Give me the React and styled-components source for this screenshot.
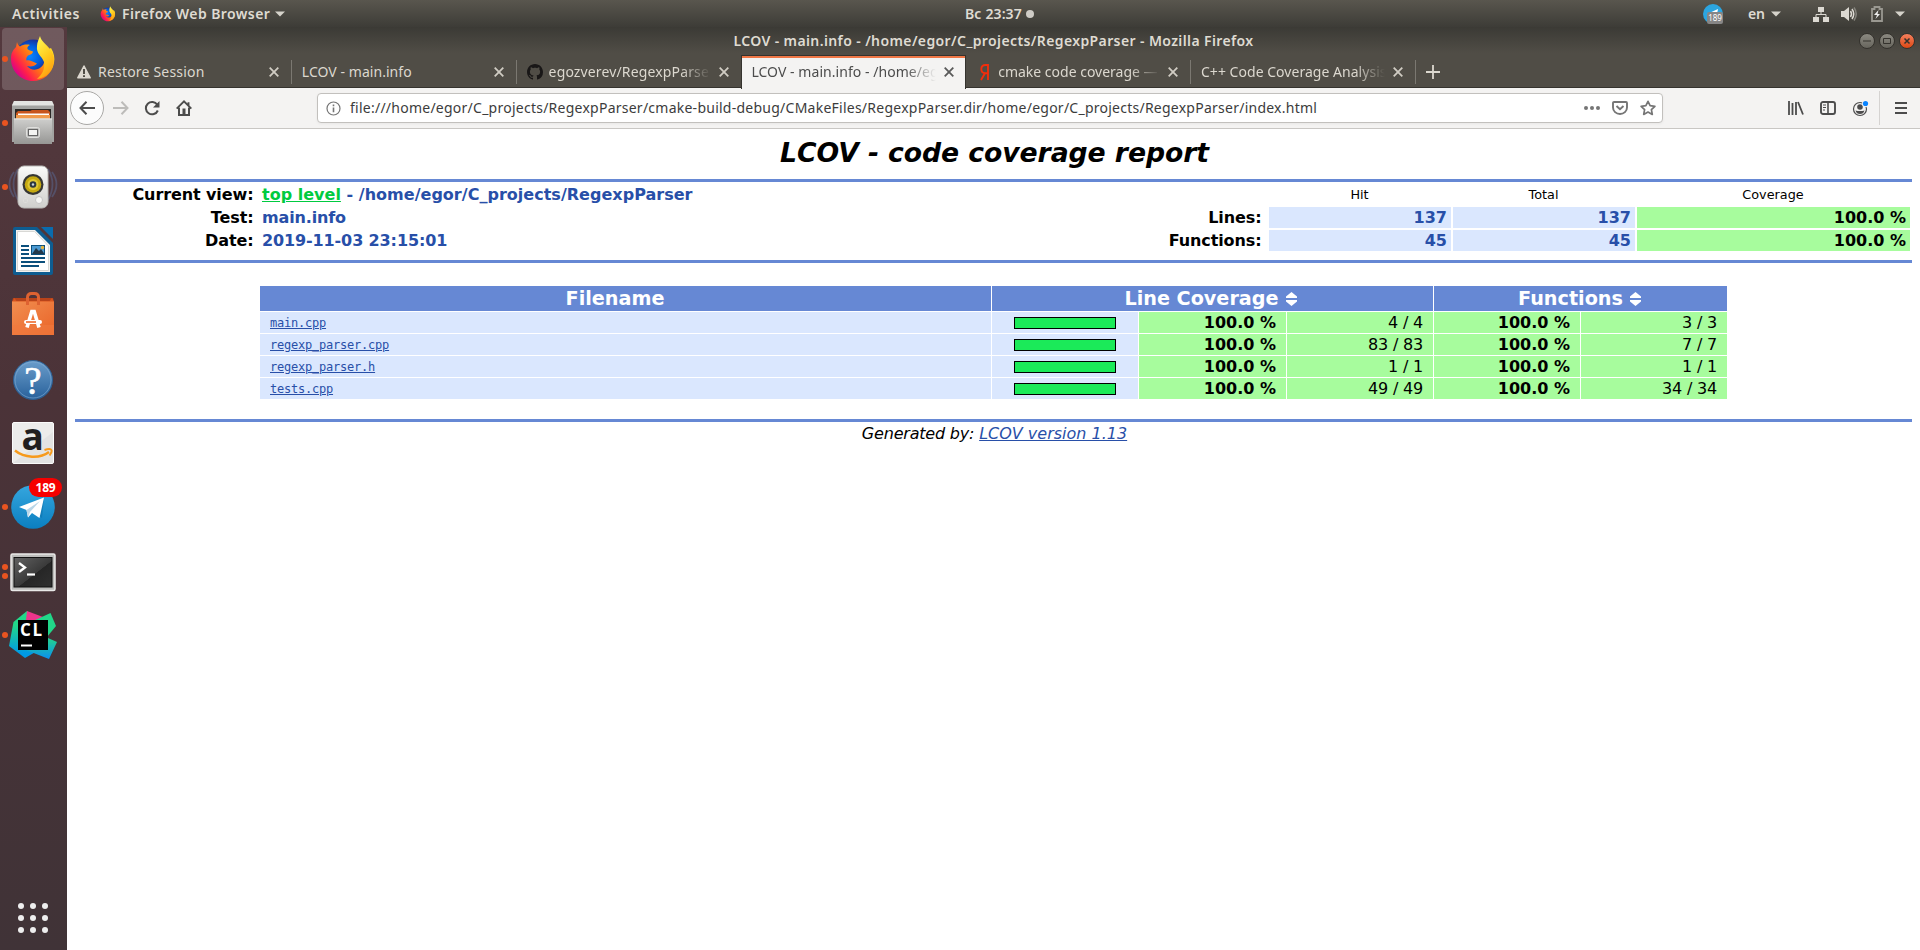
import React from "react";
import styled, { createGlobalStyle } from "styled-components";

const UI = `"Noto Sans", "Open Sans", sans-serif`;
const PAGE = `"DejaVu Sans", sans-serif`;

const GlobalStyle = createGlobalStyle`
  * { box-sizing: border-box; }
  body { margin: 0; background: #fff; overflow: hidden; }
`;

const Desktop = styled.div`
  width: 1920px; height: 950px; display: flex; flex-direction: column;
  font-family: ${UI}; font-size: 14px;
`;

/* ---------- shell top bar ---------- */
const TopBar = styled.header`
  height: 27px; flex: none; display: grid; grid-template-columns: 965px auto 1fr;
  background: linear-gradient(#59564e, #3d3c37); color: #dfdbd2;
`;
const BarGroup = styled.div`
  display: flex; align-items: center; height: 27px; min-width: 0;
  justify-content: ${(p) => p.$justify || "flex-start"};
  padding: ${(p) => p.$padding || "0"};
`;
const Label = styled.span`
  font-size: ${(p) => p.$size || 14}px;
  font-weight: ${(p) => p.$weight || 400};
  letter-spacing: ${(p) => p.$track || 0}px;
  line-height: 20px; white-space: pre; flex: none;
  margin-left: ${(p) => p.$gap || 0}px;
`;
const Glyph = styled.svg`
  flex: none; display: block; overflow: visible;
  margin-left: ${(p) => p.$gap || 0}px;
`;

/* ---------- dock ---------- */
const Body = styled.div`display: flex; flex: 1; min-height: 0;`;
const Dock = styled.nav`
  width: 67px; flex: none; display: flex; flex-direction: column; justify-content: space-between;
  background: linear-gradient(#54393e, #4b3338 40%, #403337);
`;
const DockList = styled.div`display: flex; flex-direction: column;`;
const DockItem = styled.div`
  height: 64px; padding: 1px 3px 1px 2px; position: relative;
`;
const DockTile = styled.div`
  width: 62px; height: 62px; border-radius: 4px;
  background: ${(p) => (p.$active ? "rgba(255,255,255,0.17)" : "transparent")};
`;
const Pips = styled.div`
  position: absolute; left: 2px; top: 0; height: 64px; display: flex; flex-direction: column;
  justify-content: center; gap: 3px;
`;
const Pip = styled.i`width: 6px; height: 6px; border-radius: 50%; background: #e95420;`;
const Badge = styled.span`
  position: absolute; left: 29px; top: 3px; width: 33px; height: 19px; border-radius: 10px;
  background: #f60000; color: #fff; font: 700 12px/19px ${UI}; text-align: center; letter-spacing: -0.2px;
`;
const AppsButton = styled.div`
  display: grid; grid-template-columns: repeat(3, 6px); gap: 6px; padding: 0 0 17px 18px;
`;
const AppsDot = styled.i`width: 6px; height: 6px; border-radius: 50%; background: #eee;`;

/* ---------- browser window ---------- */
const Window = styled.section`flex: 1; min-width: 0; display: flex; flex-direction: column;`;
const Chrome = styled.div`
  height: 61px; flex: none; background: linear-gradient(#3b3a35, #504d46 26px, #504d46);
  border-bottom: 1px solid #35332e; color: #dfdbd2;
`;
const TitleBar = styled.div`
  height: 28px; display: grid; grid-template-columns: 1fr auto 1fr; align-items: center;
`;
const WinButtons = styled.div`display: flex; justify-content: flex-end; gap: 4px; padding-right: 5px;`;
const WinButton = styled.span`
  width: 16px; height: 16px; border-radius: 50%; border: 1px solid #34322d;
  display: flex; align-items: center; justify-content: center;
  background: ${(p) => (p.$close ? "linear-gradient(#f4805e, #dd4814)" : "linear-gradient(#8b8981, #67655d)")};
`;
const TabStrip = styled.div`display: flex; height: 33px; align-items: flex-end;`;
const Tab = styled.div`
  width: 224.8px; height: 33px; display: flex; align-items: center; padding: 0 12.5px 0 10px;
  position: relative; color: ${(p) => (p.$active ? "#4c4c4c" : "#dcd8cf")};
  ${(p) => p.$active && `
    background: #f4f3f2; border: 1px solid #35332e; border-bottom: 0; margin-bottom: -1px; height: 34px;
    box-shadow: inset 0 2px 0 #f07746;
    padding: 0 11.5px 1px 9px;
  `}
  &::after {
    content: ""; display: ${(p) => (p.$rule ? "block" : "none")};
    position: absolute; right: 0; top: 5px; width: 1px; height: 24px; background: #7b7871;
  }
`;
const TabText = styled.div`
  flex: 1; min-width: 0; display: flex;
  margin-left: ${(p) => p.$gap || 0}px; margin-right: 8px;
  ${(p) => p.$fade && "mask-image: linear-gradient(to right, #000 calc(100% - 30px), transparent);"}
`;
const NewTab = styled.div`height: 33px; display: flex; align-items: center; padding-left: 10px;`;

const NavBar = styled.div`
  height: 41px; flex: none; display: flex; align-items: center; background: #f4f3f2;
  border-bottom: 1px solid #c9c7c4; padding: 0 13px 0 3px;
`;
const BackButton = styled.div`
  width: 34px; height: 34px; border-radius: 50%; border: 1px solid #a9a8a6; background: #fcfcfc;
  display: flex; align-items: center; justify-content: center;
`;
const UrlBar = styled.div`
  width: 1346px; height: 30px; margin-left: 125px; border: 1px solid #c2c0bd; border-radius: 4px;
  background: #fff; display: flex; align-items: center; padding: 0 6px 0 8px; color: #3c3c3c;
  box-shadow: 0 1px 3px rgba(0, 0, 0, 0.05);
`;
const Spacer = styled.div`flex: 1;`;
const NavRule = styled.div`width: 1px; height: 34px; background: #d5d3d1; margin-left: 11px;`;

/* ---------- coverage report ---------- */
const Page = styled.main`
  flex: 1; background: #fff; padding: 8px; font-family: ${PAGE}; font-size: 16px; color: #000;
`;
const Title = styled.h1`
  margin: 0; height: 42px; font: italic 700 26.67px/31px ${PAGE}; text-align: center;
  letter-spacing: -0.07px; padding-left: 2px;
`;
const Ruler = styled.div`height: 3px; background: #6688d4;`;
const Summary = styled.div`
  display: grid; grid-template-columns: 182px 1fr 100px 182px 182px 273px; grid-auto-rows: 21px;
  gap: 2px; padding: 2px 2px 9px;
`;
const Item = styled.div`
  text-align: right; font-weight: 700; line-height: 21px; padding-right: 5.5px; white-space: nowrap;
  letter-spacing: -0.1px;
`;
const Value = styled.div`
  font-weight: 700; line-height: 21px; padding-left: 1px; color: #284fa8; white-space: nowrap;
  letter-spacing: ${(p) => p.$track || 0}px;
`;
const ColHead = styled.div`font-size: 12.8px; line-height: 21px; text-align: center; padding-right: 1px;`;
const Count = styled.div`
  background: ${(p) => (p.$rate ? "#a7fc9d" : "#dae7fe")}; color: ${(p) => (p.$rate ? "#000" : "#284fa8")};
  font-weight: 700; line-height: 21px; text-align: right; padding-right: 4px;
`;
const Link = styled.a`
  color: ${(p) => (p.$top ? "#00cb40" : "#284fa8")}; text-decoration: underline;
`;
const Files = styled.div`
  display: grid; grid-template-columns: 731px 146px 147px 146px 146px 146px; gap: 1px;
  width: 1467px; margin: 23px auto 20px 185px;
`;
const Head = styled.div`
  grid-column: span ${(p) => p.$span || 1}; height: 25px; background: #6688d4; color: #fff;
  font-weight: 700; font-size: 19.2px; line-height: 23px; display: flex; justify-content: center; align-items: center;
  padding-right: ${(p) => p.$right}px;
`;
const FileCell = styled.div`
  height: 21px; background: #dae7fe; padding-left: 10px;
  font: 12px/23px "DejaVu Sans Mono", monospace; letter-spacing: -0.22px;
`;
const BarCell = styled.div`height: 21px; background: #dae7fe; display: flex; align-items: center; justify-content: center;`;
const Bar = styled.div`width: 102px; height: 12px; border: 1px solid #000; background: #1bea59;`;
const Rate = styled.div`
  height: 21px; line-height: 22px; background: #a7fc9d; text-align: right; padding-right: 10px;
  font-weight: ${(p) => (p.$bold ? 700 : 400)};
  letter-spacing: ${(p) => (p.$bold ? 0 : -0.2)}px;
`;
const Footer = styled.footer`text-align: center; font-style: italic; line-height: 19px; padding: 2px 0 0 2px;`;
const Credit = styled.span`letter-spacing: -0.2px;`;

const rows = [
  ["main.cpp", "4 / 4", "3 / 3"],
  ["regexp_parser.cpp", "83 / 83", "7 / 7"],
  ["regexp_parser.h", "1 / 1", "1 / 1"],
  ["tests.cpp", "49 / 49", "34 / 34"],
];

/* ---------- drawings ---------- */
const Caret = ({ gap }) => (
  <Glyph $gap={gap} width="10" height="6" viewBox="0 0 10 6"><path d="M0 .5h10L5 5.5z" fill="#d6d3cb" /></Glyph>
);
const FirefoxArt = ({ id }) => (
  <>
    <defs>
      <radialGradient id={id + "g"} cx=".42" cy=".45" r=".6"><stop offset="0" stopColor="#0a84ff" /><stop offset=".45" stopColor="#0060df" /><stop offset="1" stopColor="#2b0f6b" /></radialGradient>
      <linearGradient id={id + "o"} x1=".95" y1=".2" x2=".1" y2=".8"><stop offset="0" stopColor="#ffe226" /><stop offset=".3" stopColor="#ffa70b" /><stop offset=".55" stopColor="#ff6a1a" /><stop offset=".8" stopColor="#ff1f4b" /><stop offset="1" stopColor="#d4008f" /></linearGradient>
      <linearGradient id={id + "y"} x1=".3" y1="0" x2=".7" y2="1"><stop offset="0" stopColor="#fff44f" /><stop offset=".5" stopColor="#ffcb1e" /><stop offset="1" stopColor="#ff980e" /></linearGradient>
    </defs>
    <circle cx="22" cy="21" r="18.500" fill={`url(#${id}g)`} />
    <path d="M6 5C6.500 7 7.500 8.500 9 9.500C12 7.500 16 7 19 8C17 9 16 10 16.500 12C18 13.500 20 13.500 22 14.500C22 16.500 20 17.500 17 18.500C15.500 20 15 21.500 15.500 23.500C18 22.500 21 24 26 26.500C24 29 20 30 16 29C20 34 28 34 32 28C34 25 33.500 20 31 16L40 11C43 16 44 21 43 26C41 37 32 44 22 44C10 44 0 34 0 22C0 16 2 13 5 10Z" fill={`url(#${id}o)`} />
    <path d="M29 -1C30 4 35 7 39 12C43 17 43.500 23 42 29C39 37 33 41 26 42C32 37 34 31 33 25C31 19 25 17 26 9C26 5 28 2 29 -1Z" fill={`url(#${id}y)`} />
  </>
);
const FirefoxIcon = () => (
  <svg width="62" height="62" viewBox="0 0 62 62"><g transform="translate(9 9)"><FirefoxArt id="ffd" /></g></svg>
);
const FilesIcon = () => (
  <svg width="62" height="62" viewBox="0 0 62 62">
    <defs><linearGradient id="fl" x1="0" y1="0" x2="0" y2="1"><stop offset="0" stopColor="#cfcfcd" /><stop offset="1" stopColor="#969694" /></linearGradient></defs>
    <path d="M12 9h38l2 4v37H10V13z" fill="#a3a3a1" /><path d="M12 9h38l2 4.500H10z" fill="#e4e4e2" />
    <rect x="13" y="17" width="36" height="11" fill="#2b2826" />
    <path d="M14 21l2-2h12l2-1h16l2 2v8H14z" fill="#c8551d" /><path d="M14 23h34v5H14z" fill="#f19a4c" /><path d="M16 21.500h31V23H16z" fill="#fff" />
    <path d="M12 26.500h38V52H12z" fill="url(#fl)" /><path d="M12 27h38" stroke="#e8e8e6" />
    <rect x="24.500" y="35.500" width="13" height="10" rx="2" fill="#bdbdbb" stroke="#e0e0de" /><rect x="26.500" y="37.500" width="9" height="6" fill="#f4f4f2" stroke="#666" />
  </svg>
);
const RhythmboxIcon = () => (
  <svg width="62" height="62" viewBox="0 0 62 62">
    <defs><linearGradient id="rb" x1="0" y1="0" x2="0" y2="1"><stop offset="0" stopColor="#fbfbfa" /><stop offset="1" stopColor="#cfcfcc" /></linearGradient></defs>
    <g fill="none" stroke="#5a6a94" strokeWidth="1.800" opacity=".5"><path d="M12 16q-9 12 0 25M16 13q-9 15 0 31M50 16q9 12 0 25M46 13q9 15 0 31" /></g>
    <rect x="16" y="10" width="30" height="42" rx="6" fill="url(#rb)" stroke="#b9b9b6" />
    <circle cx="31" cy="28.500" r="10.500" fill="#363734" /><circle cx="31" cy="28.500" r="8.300" fill="#c5a911" /><circle cx="31" cy="28.500" r="5.500" fill="#e0c832" />
    <circle cx="31" cy="28.500" r="3.300" fill="#2d3840" /><circle cx="31" cy="28.500" r="1.200" fill="#c9d6dc" />
    <circle cx="37" cy="44" r="3.500" fill="#f6f6f4" stroke="#c4c4c4" /><rect x="21.500" y="42.500" width="4" height="4" rx="1" fill="none" stroke="#dededb" />
  </svg>
);
const WriterIcon = () => (
  <svg width="62" height="62" viewBox="0 0 62 62">
    <path d="M13 7h22l16 16v30a2 2 0 0 1-2 2H13a2 2 0 0 1-2-2V9a2 2 0 0 1 2-2z" fill="#0e5d91" />
    <path d="M14 10h19l15 15v27H14z" fill="#f2f2f0" /><path d="M15.500 11.500h17L46.500 26v24.500h-31z" fill="#fff" stroke="#d8d8d5" />
    <path d="M39 7h12v12z" fill="#0a6cae" />
    <g stroke="#0b4f7c" strokeWidth="2"><path d="M19 26h8M19 30h8M19 34h8M19 38h24M19 42h24M19 46h18" /></g>
    <rect x="29.500" y="25.500" width="13" height="9" fill="#4c9ad2" stroke="#0b4f7c" /><path d="M30 34l4-6 3 3 2-2 3.500 5z" fill="#22384a" /><circle cx="40.500" cy="27.500" r="1.700" fill="#e9b43a" />
  </svg>
);
const SoftwareIcon = () => (
  <svg width="62" height="62" viewBox="0 0 62 62">
    <defs><linearGradient id="sw" x1="0" y1="0" x2="1" y2="1"><stop offset="0" stopColor="#f18e50" /><stop offset="1" stopColor="#ea6428" /></linearGradient></defs>
    <path d="M11 14h40l1 4H10z" fill="#b8431a" /><path d="M10 18l2.500-4 2 3h33l2.500-3 2 4z" fill="#d7541f" />
    <rect x="10" y="17.500" width="42" height="33.500" fill="url(#sw)" /><path d="M10 41h42v10H10z" fill="#f0793f" opacity=".6" />
    <path d="M25.500 21v-7.500q0-4 4-4h3q4 0 4 4V21" fill="none" stroke="#de6231" strokeWidth="3" />
    <path d="M25 43.500l4.800-16h2.400l4.800 16" fill="none" stroke="#fff" strokeWidth="3.600" /><rect x="22" y="36" width="18" height="4" rx="2" fill="#fff" /><path d="M24 38h10" stroke="#ee6b2d" strokeWidth="1.600" />
  </svg>
);
const HelpIcon = () => (
  <svg width="62" height="62" viewBox="0 0 62 62">
    <defs><linearGradient id="hp" x1="0" y1="0" x2="0" y2="1"><stop offset="0" stopColor="#6b9dcb" /><stop offset="1" stopColor="#28619b" /></linearGradient></defs>
    <circle cx="31" cy="32" r="19.500" fill="url(#hp)" stroke="#2d5f92" /><circle cx="31" cy="32" r="18" fill="none" stroke="#84aed4" opacity=".6" />
    <text x="31" y="45.500" textAnchor="middle" fill="#fff" stroke="#fff" strokeWidth=".6" fontFamily="Liberation Serif, serif" fontSize="39">?</text>
  </svg>
);
const AmazonIcon = () => (
  <svg width="62" height="62" viewBox="0 0 62 62">
    <rect x="10.500" y="10.500" width="41" height="41" rx="1.500" fill="#ececeb" stroke="#fbfbfb" /><path d="M11 51L51 20v31z" fill="#dededd" opacity=".6" />
    <text x="30.800" y="37.500" textAnchor="middle" fill="#221f1f" fontFamily="Open Sans, sans-serif" fontWeight="700" fontSize="37">a</text>
    <path d="M13 38.500C22 46 38 47 47 40" fill="none" stroke="#f79a1c" strokeWidth="2.400" /><path d="M42.500 38c3-1 5-1.500 6.500-.5s.5 3-1.500 6" fill="none" stroke="#f79a1c" strokeWidth="2" />
  </svg>
);
const TelegramIcon = () => (
  <svg width="62" height="62" viewBox="0 0 62 62">
    <defs><linearGradient id="tg" x1="0" y1="0" x2="0" y2="1"><stop offset="0" stopColor="#35a6de" /><stop offset="1" stopColor="#0b7fc0" /></linearGradient></defs>
    <circle cx="31" cy="31" r="21.800" fill="url(#tg)" /><path d="M42 23l-2 19-6-5z" fill="#0a6da8" opacity=".5" />
    <path d="M17 31L42 21.500 37.500 42 30 37 26 41.500 24.500 34z" fill="#fff" /><path d="M24.500 34L38 25 28 36l-2 5.500z" fill="#b9d6e8" />
  </svg>
);
const TerminalIcon = () => (
  <svg width="62" height="62" viewBox="0 0 62 62">
    <defs><linearGradient id="tm" x1="0" y1="0" x2="1" y2="1"><stop offset="0" stopColor="#626262" /><stop offset=".55" stopColor="#3a3a3a" /><stop offset=".56" stopColor="#262626" /><stop offset="1" stopColor="#303030" /></linearGradient></defs>
    <rect x="9" y="14" width="44" height="36.500" rx="1.500" fill="#bdbdbb" stroke="#e9e9e8" strokeWidth="1.500" /><rect x="12" y="17.500" width="38" height="29.500" fill="url(#tm)" stroke="#111" />
    <path d="M17 23l6 4.500-6 4.500" fill="none" stroke="#fff" strokeWidth="2.300" /><path d="M25 34.500h8" stroke="#fff" strokeWidth="2.200" />
  </svg>
);
const ClionIcon = () => (
  <svg width="62" height="62" viewBox="0 0 62 62">
    <defs>
      <linearGradient id="c1" x1="0" y1="0" x2="0" y2="1"><stop offset=".3" stopColor="#21d789" /><stop offset=".9" stopColor="#009ae5" /></linearGradient>
      <linearGradient id="c2" x1="0" y1="0" x2="0" y2="1"><stop offset="0" stopColor="#21d789" /><stop offset=".4" stopColor="#1fc89a" /><stop offset="1" stopColor="#0a8ff0" /></linearGradient>
    </defs>
    <path d="M25 7L11.500 18 7 42l16 12 14-8V20z" fill="url(#c1)" /><path d="M25 7L41 13 31 28 24 16z" fill="#ed358c" /><path d="M31 17L48.500 9l5.500 13-9 11z" fill="#21d789" />
    <path d="M38 26l8 8 9 4-8 17-23-9z" fill="url(#c2)" />
    <rect x="16" y="16" width="30" height="30" fill="#000" />
    <text x="18" y="31.500" fill="#fff" fontFamily="Open Sans, sans-serif" fontWeight="700" fontSize="17" textLength="22">CL</text>
    <path d="M19 41.500h11" stroke="#fff" strokeWidth="2" />
  </svg>
);
const CloseX = ({ dark }) => (
  <Glyph width="10" height="10" viewBox="0 0 10 10"><path d="M.7.700l8.600 8.600M9.300.700L.7 9.300" stroke={dark ? "#5a5a5a" : "#d0ccc3"} strokeWidth="1.800" /></Glyph>
);
const SortIcon = () => (
  <Glyph $gap={7} width="11" height="14" viewBox="0 0 11 14"><path d="M5.500 0L11 4.500V6H0V4.500zM0 8h11v1.500L5.500 14 0 9.500z" fill="#fff" /></Glyph>
);
const GithubIcon = () => (
  <Glyph width="16" height="16" viewBox="0 0 16 16"><path fill="#191717" d="M8 0C3.580 0 0 3.580 0 8c0 3.540 2.290 6.530 5.470 7.590.4.070.55-.17.55-.38 0-.19-.01-.82-.01-1.490-2.010.37-2.530-.49-2.690-.94-.09-.23-.48-.94-.82-1.130-.28-.15-.68-.52-.01-.53.63-.01 1.080.58 1.230.82.72 1.210 1.870.87 2.330.66.070-.52.28-.87.51-1.070-1.780-.2-3.640-.89-3.640-3.950 0-.87.31-1.590.82-2.150-.08-.2-.36-1.020.08-2.120 0 0 .67-.21 2.200.82.64-.18 1.320-.27 2-.27s1.360.09 2 .27c1.530-1.040 2.200-.82 2.200-.82.44 1.100.16 1.920.08 2.120.51.56.82 1.270.82 2.150 0 3.070-1.870 3.750-3.650 3.950.29.25.54.73.54 1.480 0 1.070-.01 1.930-.01 2.200 0 .21.15.46.55.38A8.010 8.010 0 0 0 16 8c0-4.420-3.580-8-8-8z" /></Glyph>
);
const YandexIcon = () => (
  <Glyph $gap={4} width="9" height="16" viewBox="0 0 9 16"><path d="M8 0v16M8 1H5.500C3 1 1.300 2.500 1.300 5s1.700 4.200 4 4.200H8M5 9.200L1 16" fill="none" stroke="#f22e0c" strokeWidth="1.900" /></Glyph>
);

const dock = [
  { art: FirefoxIcon, pips: 1, active: true },
  { art: FilesIcon, pips: 1 },
  { art: RhythmboxIcon, pips: 1 },
  { art: WriterIcon },
  { art: SoftwareIcon },
  { art: HelpIcon },
  { art: AmazonIcon },
  { art: TelegramIcon, pips: 1, badge: "189" },
  { art: TerminalIcon, pips: 2 },
  { art: ClionIcon, pips: 1 },
];

export default function App() {
  return (
    <Desktop>
      <GlobalStyle />
      <TopBar>
        <BarGroup $padding="0 0 0 12px">
          <Label $weight={600} $track={0.55}>Activities</Label>
          <Glyph $gap={20} width="16" height="16" viewBox="-1 -2 46 48"><FirefoxArt id="fft" /></Glyph>
          <Label $gap={6} $weight={600} $track={0.42}>Firefox Web Browser</Label>
          <Caret gap={5} />
        </BarGroup>
        <BarGroup>
          <Label $weight={600} $track={0.12}>Вс 23:37</Label>
          <Glyph $gap={4} width="8" height="8" viewBox="0 0 8 8"><circle cx="4" cy="4" r="4" fill="#cfccc6" /></Glyph>
        </BarGroup>
        <BarGroup $justify="flex-end" $padding="0 15px 0 0">
          <Glyph width="20" height="20" viewBox="0 0 20 20">
            <circle cx="10" cy="10" r="10" fill="#2ca5e0" /><path d="M4 10l11-5-1 5z" fill="#fff" /><rect x="4" y="8" width="16" height="12" rx="2" fill="#868686" />
            <text x="12" y="17" textAnchor="middle" fontFamily={UI} fontSize="8" fill="#fff">189</text>
          </Glyph>
          <Label $gap={25} $weight={600}>en</Label>
          <Caret gap={6} />
          <Glyph $gap={32} width="16" height="16" viewBox="0 0 16 16"><path d="M5 1h6v5H5zM0 11h6v5H0zM10 11h6v5h-6z" fill="#dcd9d2" /><path d="M8 6v3M3 11V8.500h10V11" fill="none" stroke="#dcd9d2" /></Glyph>
          <Glyph $gap={12} width="16" height="16" viewBox="0 0 16 16"><path d="M0 5h3l5-4v14l-5-4H0z" fill="#dcd9d2" /><path d="M9.500 5q2 3 0 6M11 3q3.500 5 0 10" fill="none" stroke="#dcd9d2" strokeWidth="1.500" /><path d="M13 1.500q4.500 6.500 0 13" fill="none" stroke="#84827b" strokeWidth="1.500" /></Glyph>
          <Glyph $gap={14} width="12" height="16" viewBox="0 0 12 16"><path d="M1 3h2.500V1h5v2H11v12H1z" fill="none" stroke="#9a9891" strokeWidth="1.800" /><path d="M7.500 4L3 9h3l-1.500 4L9 8H6.500z" fill="#eee" /></Glyph>
          <Caret gap={12} />
        </BarGroup>
      </TopBar>
      <Body>
        <Dock>
          <DockList>
            {dock.map((d, i) => (
              <DockItem key={i}>
                <DockTile $active={d.active}><d.art /></DockTile>
                {d.pips && <Pips>{Array.from({ length: d.pips }, (_, k) => <Pip key={k} />)}</Pips>}
                {d.badge && <Badge>{d.badge}</Badge>}
              </DockItem>
            ))}
          </DockList>
          <AppsButton>{Array.from({ length: 9 }, (_, k) => <AppsDot key={k} />)}</AppsButton>
        </Dock>
        <Window>
          <Chrome>
            <TitleBar>
              <span />
              <Label $weight={600} $track={0.39}>LCOV - main.info - /home/egor/C_projects/RegexpParser - Mozilla Firefox</Label>
              <WinButtons>
                <WinButton><svg width="8" height="8"><path d="M0 4h8" stroke="#34322d" /></svg></WinButton>
                <WinButton><svg width="8" height="8"><path d="M.5 1.500h7v5h-7z" fill="none" stroke="#34322d" /></svg></WinButton>
                <WinButton $close><svg width="8" height="8"><path d="M1.500 1.500l5 5M6.500 1.500l-5 5" stroke="#34322d" strokeWidth="1.500" /></svg></WinButton>
              </WinButtons>
            </TitleBar>
            <TabStrip>
              <Tab $rule>
                <Glyph width="14" height="14" viewBox="0 0 14 14"><path d="M7 1L13.200 12.800H.8z" fill="#dcd8cf" stroke="#dcd8cf" strokeWidth="1.500" strokeLinejoin="round" /><path d="M7 4v5M7 10.300v1.700" stroke="#504d46" strokeWidth="2" /></Glyph>
                <TabText $gap={7}><Label $track={0.2}>Restore Session</Label></TabText><CloseX />
              </Tab>
              <Tab $rule><TabText><Label $track={0.05}>LCOV - main.info</Label></TabText><CloseX /></Tab>
              <Tab><GithubIcon /><TabText $gap={6} $fade><Label $track={0.14}>egozverev/RegexpParse</Label></TabText><CloseX /></Tab>
              <Tab $active><TabText $fade><Label $track={0.05}>LCOV - main.info - /home/eg</Label></TabText><CloseX dark /></Tab>
              <Tab $rule><YandexIcon /><TabText $gap={9} $fade><Label>cmake code coverage —</Label></TabText><CloseX /></Tab>
              <Tab $rule><TabText $fade><Label $track={0.03}>C++ Code Coverage Analysis</Label></TabText><CloseX /></Tab>
              <NewTab><Glyph width="14" height="14" viewBox="0 0 14 14"><path d="M7 0v14M0 7h14" stroke="#dcd8cf" strokeWidth="1.800" /></Glyph></NewTab>
            </TabStrip>
          </Chrome>
          <NavBar>
            <BackButton><svg width="16" height="14" viewBox="0 0 16 14"><path d="M7.500.8L1.500 7l6 6.200M1.500 7H16" fill="none" stroke="#4c4c4c" strokeWidth="2" /></svg></BackButton>
            <Glyph $gap={9} width="16" height="14" viewBox="0 0 16 14"><path d="M8.500.8l6 6.200-6 6.200M14.500 7H0" fill="none" stroke="#bdbcba" strokeWidth="2" /></Glyph>
            <Glyph $gap={15} width="16" height="16" viewBox="0 0 16 16"><path d="M13.300 4.800A6.200 6.200 0 1 0 13.800 10.500" fill="none" stroke="#4c4c4c" strokeWidth="2" /><path d="M15.500 1v6.500H9z" fill="#4c4c4c" /></Glyph>
            <Glyph $gap={16} width="16" height="16" viewBox="0 0 16 16"><path d="M.7 8.700L8 1.400l7.300 7.300M12.500 5.500V2.200" fill="none" stroke="#4c4c4c" strokeWidth="1.900" /><path d="M3 7.500V15h10V7.500" fill="none" stroke="#4c4c4c" strokeWidth="2" /><path d="M6.500 8.500h3V14h-3z" fill="#4c4c4c" /></Glyph>
            <UrlBar>
              <Glyph width="15" height="15" viewBox="0 0 15 15"><circle cx="7.500" cy="7.500" r="6.500" fill="none" stroke="#757575" strokeWidth="1.200" /><path d="M7.500 6.500v4.800M7.500 3.500v1.800" stroke="#757575" strokeWidth="1.600" /></Glyph>
              <Label $gap={9} $track={0.247}>file:///home/egor/C_projects/RegexpParser/cmake-build-debug/CMakeFiles/RegexpParser.dir/home/egor/C_projects/RegexpParser/index.html</Label>
              <Spacer />
              <Glyph width="16" height="4" viewBox="0 0 16 4"><g fill="#757575"><circle cx="2" cy="2" r="2" /><circle cx="8" cy="2" r="2" /><circle cx="14" cy="2" r="2" /></g></Glyph>
              <Glyph $gap={12} width="16" height="14" viewBox="0 0 16 14"><path d="M2 1h12a1 1 0 0 1 1 1v4.500a7 6.500 0 0 1-14 0V2a1 1 0 0 1 1-1z" fill="none" stroke="#757575" strokeWidth="1.900" /><path d="M4.500 5L8 8.300 11.500 5" fill="none" stroke="#757575" strokeWidth="1.900" /></Glyph>
              <Glyph $gap={12} width="16" height="16" viewBox="0 0 16 16"><path d="M8 1.300l2.100 4.400 4.800.6-3.500 3.300.9 4.800L8 12l-4.300 2.400.9-4.800L1.100 6.300l4.800-.6z" fill="none" stroke="#757575" strokeWidth="1.700" strokeLinejoin="round" /></Glyph>
            </UrlBar>
            <Spacer />
            <Glyph width="16" height="14" viewBox="0 0 16 14"><path d="M1 0v14M4.500 2v12M8 1v13M10 1l5 12.500" stroke="#4c4c4c" strokeWidth="1.800" /></Glyph>
            <Glyph $gap={16} width="16" height="14" viewBox="0 0 16 14"><rect x="1" y="1" width="14" height="12" rx="2" fill="none" stroke="#4c4c4c" strokeWidth="1.900" /><path d="M8 1v12" stroke="#4c4c4c" strokeWidth="1.600" /><path d="M3 4h3M3 6.500h3M3 9h2" stroke="#4c4c4c" /></Glyph>
            <Glyph $gap={17} width="15" height="15" viewBox="0 0 15 15"><circle cx="7" cy="8" r="6.500" fill="none" stroke="#4c4c4c" strokeWidth="1.200" /><circle cx="7" cy="6" r="2.800" fill="#4c4c4c" /><path d="M2.500 9.500q2 .5 4.500.5t4.500-.5q-1 3.500-4.500 3.500t-4.500-3.500z" fill="#4c4c4c" /><circle cx="12.500" cy="2.500" r="3.500" fill="#f4f3f2" /><circle cx="12.500" cy="2.500" r="2.600" fill="#0a84ff" /></Glyph>
            <NavRule />
            <Glyph $gap={15} width="12" height="12" viewBox="0 0 12 12"><path d="M0 1h12M0 6h12M0 11h12" stroke="#4c4c4c" strokeWidth="2" /></Glyph>
          </NavBar>
          <Page>
            <Title>LCOV - code coverage report</Title>
            <Ruler />
            <Summary>
              <Item>Current view:</Item><Value $track={0.02}><Link $top>top level</Link> - /home/egor/C_projects/RegexpParser</Value><span /><ColHead>Hit</ColHead><ColHead>Total</ColHead><ColHead>Coverage</ColHead>
              <Item>Test:</Item><Value $track={-0.15}>main.info</Value><Item>Lines:</Item><Count>137</Count><Count>137</Count><Count $rate>100.0 %</Count>
              <Item>Date:</Item><Value $track={-0.12}>2019-11-03 23:15:01</Value><Item>Functions:</Item><Count>45</Count><Count>45</Count><Count $rate>100.0 %</Count>
            </Summary>
            <Ruler />
            <Files>
              <Head $right={21}>Filename</Head>
              <Head $span={3} $right={4}><span>Line Coverage</span><SortIcon /></Head>
              <Head $span={2} $right={2}><span>Functions</span><SortIcon /></Head>
              {rows.map(([name, lines, fns]) => (
                <React.Fragment key={name}>
                  <FileCell><Link>{name}</Link></FileCell>
                  <BarCell><Bar /></BarCell>
                  <Rate $bold>100.0 %</Rate><Rate>{lines}</Rate>
                  <Rate $bold>100.0 %</Rate><Rate>{fns}</Rate>
                </React.Fragment>
              ))}
            </Files>
            <Ruler />
            <Footer><Credit>Generated by: </Credit><Link>LCOV version 1.13</Link></Footer>
          </Page>
        </Window>
      </Body>
    </Desktop>
  );
}
